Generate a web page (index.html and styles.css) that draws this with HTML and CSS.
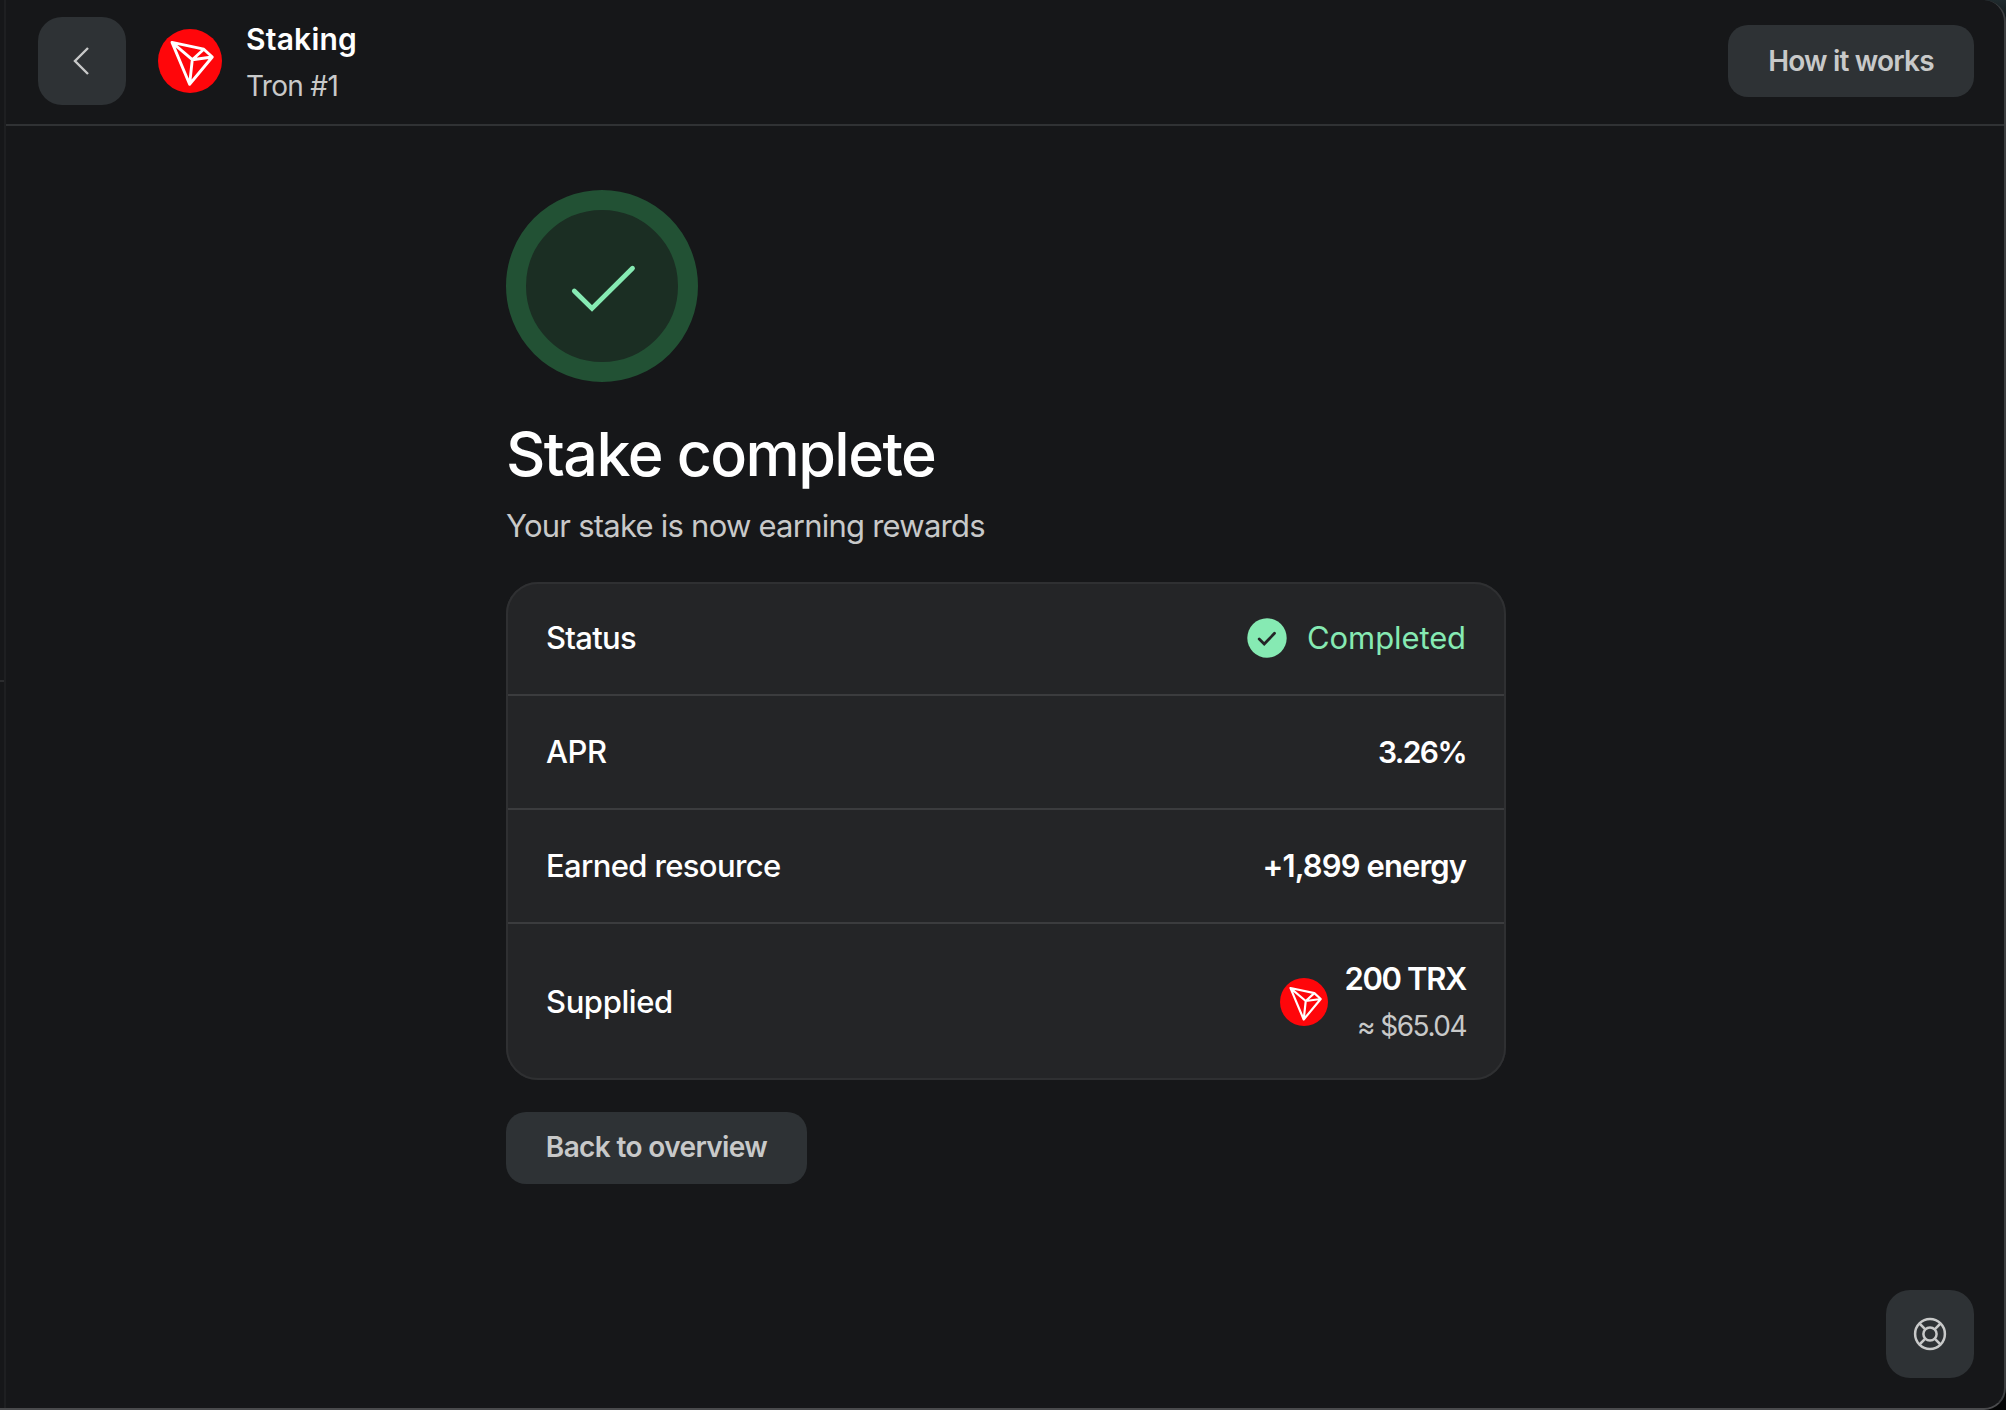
FILE: index.html
```html
<!DOCTYPE html>
<html lang="en">
<head>
<meta charset="utf-8">
<title>Staking</title>
<link rel="stylesheet" href="styles.css">
</head>
<body>
<svg class="defs" aria-hidden="true">
  <symbol id="tron" viewBox="0 0 64 64">
    <circle cx="32" cy="32" r="32" fill="#ff060a"/>
    <path d="M14 13.4 45.8 20.2 54.3 28 31.6 55.3ZM14 13.4 34.3 30.7 45.8 20.2M54.3 28 34.3 30.7 31.6 55.3" fill="none" stroke="#fff" stroke-width="2.9" stroke-linejoin="round"/>
  </symbol>
</svg>
<div class="window">
  <aside class="sidebar"><div class="sidebar-divider"></div></aside>
  <div class="panel">
    <header class="header">
      <button class="icon-button back" aria-label="Back">
        <svg width="20" height="32" viewBox="0 0 20 32"><path d="M17 3 4 16 17 29" fill="none" stroke="#c8c9c9" stroke-width="2.4"/></svg>
      </button>
      <svg class="header-logo"><use href="#tron"/></svg>
      <div class="titles">
        <div class="title">Staking</div>
        <div class="account">Tron #1</div>
      </div>
      <button class="button how">How it works</button>
    </header>
    <main class="content">
      <svg class="success" viewBox="0 0 192 192">
        <circle cx="96" cy="96" r="86" fill="#1b2e23" stroke="#225134" stroke-width="20"/>
        <path d="M68.3 101 86 118.4 126.5 78.2" fill="none" stroke="#86eab3" stroke-width="4.8" stroke-linecap="round"/>
      </svg>
      <h1 class="heading">Stake complete</h1>
      <p class="subtitle">Your stake is now earning rewards</p>
      <section class="card">
        <div class="row">
          <span class="label status">Status</span>
          <span class="completed">
            <svg width="40" height="40" viewBox="0 0 40 40"><circle cx="20" cy="20" r="19.7" fill="#86eab3"/><path d="M12.2 21 17.2 26 27.5 15.3" fill="none" stroke="#242527" stroke-width="2.8" stroke-linecap="round"/></svg>
            <span>Completed</span>
          </span>
        </div>
        <div class="row">
          <span class="label apr">APR</span>
          <span class="value rate">3.26%</span>
        </div>
        <div class="row">
          <span class="label earned">Earned resource</span>
          <span class="value energy">+1,899 energy</span>
        </div>
        <div class="row row-tall">
          <span class="label supplied">Supplied</span>
          <span class="supply">
            <svg class="token"><use href="#tron"/></svg>
            <span class="amounts">
              <span class="value amount">200 TRX</span>
              <span class="fiat">≈ $65.04</span>
            </span>
          </span>
        </div>
      </section>
      <button class="button overview">Back to overview</button>
    </main>
    <button class="icon-button help" aria-label="Support">
      <svg width="34" height="34" viewBox="0 0 34 34" fill="none" stroke="#c8c9c9" stroke-width="2.5"><circle cx="17" cy="17" r="14.9"/><circle cx="17" cy="17" r="6.6"/><path d="m6.5 6.5 5.8 5.8M27.5 6.5l-5.8 5.8M6.5 27.5l5.8-5.8M27.5 27.5l-5.8-5.8"/></svg>
    </button>
  </div>
</div>
</body>
</html>
```
FILE: styles.css
```css
* { box-sizing: border-box; }
body {
  margin: 0;
  height: 1410px;
  overflow: hidden;
  background: linear-gradient(#202b2e 0, #050606 40px);
  color: #fff;
  font-family: Inter, "Liberation Sans", sans-serif;
}
.defs { position: absolute; width: 0; height: 0; }
.window {
  display: flex;
  width: 2006px;
  height: 1410px;
  background: #161719;
  border-right: 2px solid #3c3e40;
  border-bottom: 2px solid #4a4b4d;
  border-radius: 0 22px 22px 0;
}
.sidebar { width: 4px; padding-top: 680px; }
.sidebar-divider { height: 2px; background: #2b2c2e; }
.panel {
  position: relative;
  flex: 1;
  border-left: 2px solid #1e1f21;
}
.header {
  display: flex;
  align-items: center;
  height: 126px;
  padding: 0 30px 2px 32px;
  border-bottom: 2px solid #303234;
}
button {
  display: flex;
  align-items: center;
  justify-content: center;
  border: 0;
  padding: 0;
  background: #2e3235;
  color: #c8c9c9;
  font: 600 28px/40px Inter, "Liberation Sans", sans-serif;
  white-space: nowrap;
}
.icon-button { width: 88px; height: 88px; border-radius: 24px; }
.back svg { margin-right: 3px; }
.header-logo { width: 64px; height: 64px; margin-left: 32px; }
.titles { margin-left: 24px; padding-top: 6px; white-space: nowrap; }
.title { font-size: 30px; line-height: 45px; font-weight: 600; letter-spacing: 0.21px; }
.account { font-size: 28px; line-height: 49px; letter-spacing: -0.68px; color: #c8c9c9; }
.button { height: 72px; padding-bottom: 1px; border-radius: 20px; }
.how { width: 246px; margin-left: auto; letter-spacing: -0.81px; }
.content { width: 1500px; padding: 64px 0 0 500px; }
.success { display: block; width: 192px; height: 192px; }
.heading {
  margin: 36px 0 0;
  font-size: 61px;
  line-height: 72px;
  font-weight: 500;
  letter-spacing: -1.55px;
}
.subtitle {
  margin: 12px 0 32px;
  font-size: 31px;
  line-height: 48px;
  letter-spacing: -0.76px;
  color: #c8c9c9;
}
.card {
  position: relative;
  width: 1000px;
  border-radius: 32px;
  background: #242527;
  font-size: 31px;
  line-height: 48px;
}
.card::after {
  content: "";
  position: absolute;
  inset: 0;
  border: 2px solid #2f3032;
  border-radius: 32px;
}
.row {
  display: flex;
  align-items: center;
  justify-content: space-between;
  height: 114px;
  padding: 0 40px;
  border-bottom: 2px solid #3b3c3e;
}
.row-tall { height: 156px; border-bottom: 0; }
.label { font-weight: 500; }
.status { letter-spacing: -0.71px; }
.apr { letter-spacing: -0.43px; }
.earned { letter-spacing: -0.64px; }
.supplied { letter-spacing: -0.4px; }
.completed { display: flex; align-items: center; gap: 20px; letter-spacing: -0.1px; color: #86eab3; }
.value { font-weight: 600; }
.rate { font-size: 30px; letter-spacing: -1.6px; }
.energy { letter-spacing: -0.9px; }
.supply { display: flex; align-items: center; gap: 16px; }
.token { width: 48px; height: 48px; }
.amounts { display: flex; flex-direction: column; align-items: flex-end; padding-top: 3px; }
.amount { line-height: 46px; letter-spacing: -1.35px; }
.fiat { font-size: 28px; line-height: 49px; letter-spacing: -1.5px; color: #c8c9c9; }
.overview { width: 301px; margin-top: 32px; padding-bottom: 2px; letter-spacing: -0.64px; }
.help { position: absolute; right: 30px; bottom: 30px; }
```
